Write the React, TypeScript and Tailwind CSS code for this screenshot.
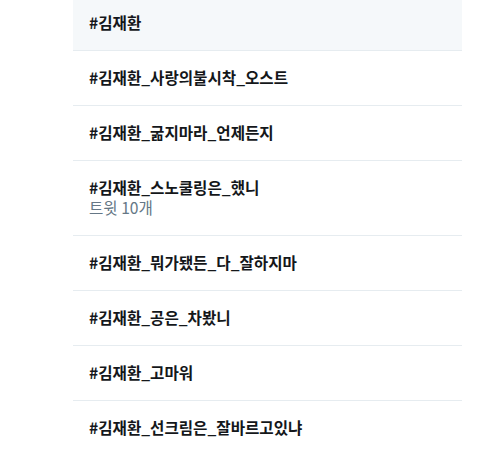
const trends = [
  { tag: '#김재환', active: true },
  { tag: '#김재환_사랑의불시착_오스트' },
  { tag: '#김재환_굶지마라_언제든지' },
  { tag: '#김재환_스노쿨링은_했니', count: '트윗 10개' },
  { tag: '#김재환_뭐가됐든_다_잘하지마' },
  { tag: '#김재환_공은_차봤니' },
  { tag: '#김재환_고마워' },
  { tag: '#김재환_선크림은_잘바르고있냐' },
];

export default function App() {
  return (
    <div
      className="w-[480px] h-[450px] overflow-hidden bg-white"
      style={{ fontFamily: '"Noto Sans CJK KR", "Noto Sans", sans-serif' }}
    >
      <ul className="ml-[73px] w-[389px]">
        {trends.map((t, i) => (
          <li
            key={i}
            className={`border-b border-[#e6ecf0] px-4 ${
              t.active ? 'bg-[#f5f8fa] pt-[12px] pb-[18px]' : 'pt-[16px] pb-[18px]'
            }`}
          >
            <div className="text-[15.6px] leading-5 font-bold text-[#14171a]">{t.tag}</div>
            {t.count && <div className="text-[15.6px] leading-5 text-[#657786]">{t.count}</div>}
          </li>
        ))}
      </ul>
    </div>
  );
}
